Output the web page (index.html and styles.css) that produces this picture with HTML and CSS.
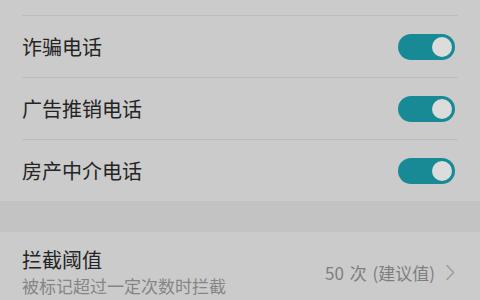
FILE: index.html
```html
<!DOCTYPE html>
<html lang="zh-CN">
<head>
<meta charset="utf-8">
<link rel="stylesheet" href="styles.css">
</head>
<body>
<div class="page">
  <div class="group">
    <div class="row">
      <span class="label">诈骗电话</span>
      <span class="switch"><span class="knob"></span></span>
    </div>
    <div class="row">
      <span class="label">广告推销电话</span>
      <span class="switch"><span class="knob"></span></span>
    </div>
    <div class="row">
      <span class="label">房产中介电话</span>
      <span class="switch"><span class="knob"></span></span>
    </div>
  </div>
  <div class="band"></div>
  <div class="group">
    <div class="row tall">
      <div class="texts">
        <span class="label">拦截阈值</span>
        <span class="sub">被标记超过一定次数时拦截</span>
      </div>
      <div class="value">
        <span>50 次 (建议值)</span>
        <svg class="chev" width="10" height="17" viewBox="0 0 10 17"><path d="M2 1.5 L8.5 8.5 L2 15.5" fill="none" stroke="#a0a0a0" stroke-width="1.6" stroke-linecap="round" stroke-linejoin="round"/></svg>
      </div>
    </div>
  </div>
</div>
</body>
</html>
```
FILE: styles.css
```css
html, body {
  margin: 0;
  padding: 0;
  background: #cbcbcb;
}
body {
  width: 480px;
  height: 300px;
  overflow: hidden;
  font-family: "Noto Sans CJK SC", "Noto Sans", sans-serif;
}
.page {
  padding-top: 15px;
}
.group {
  padding: 0 22px;
}
.row {
  height: 61px;
  border-top: 1px solid #bdbdbd;
  display: flex;
  align-items: center;
  justify-content: space-between;
}
.band + .group .row:first-child {
  border-top: none;
}
.label {
  font-size: 20px;
  color: #242424;
  line-height: 26px;
}
.switch {
  width: 57px;
  height: 26px;
  border-radius: 13px;
  background: #178a96;
  display: flex;
  align-items: center;
  justify-content: flex-end;
  padding-right: 3px;
  box-sizing: border-box;
  margin-right: 3px;
}
.knob {
  width: 20px;
  height: 20px;
  border-radius: 50%;
  background: #dcdcdc;
}
.band {
  height: 31px;
  background: #c3c3c3;
}
.row.tall {
  height: 68px;
  align-items: flex-start;
  padding-top: 15px;
  box-sizing: border-box;
}
.texts {
  display: flex;
  flex-direction: column;
}
.sub {
  font-size: 17px;
  color: #858585;
  line-height: 25px;
}
.value {
  display: flex;
  align-items: center;
  gap: 10px;
  font-size: 17px;
  color: #7e7e7e;
  margin-top: 13px;
  margin-right: 3px;
  word-spacing: 2px;
}
.chev {
  display: block;
}
```
